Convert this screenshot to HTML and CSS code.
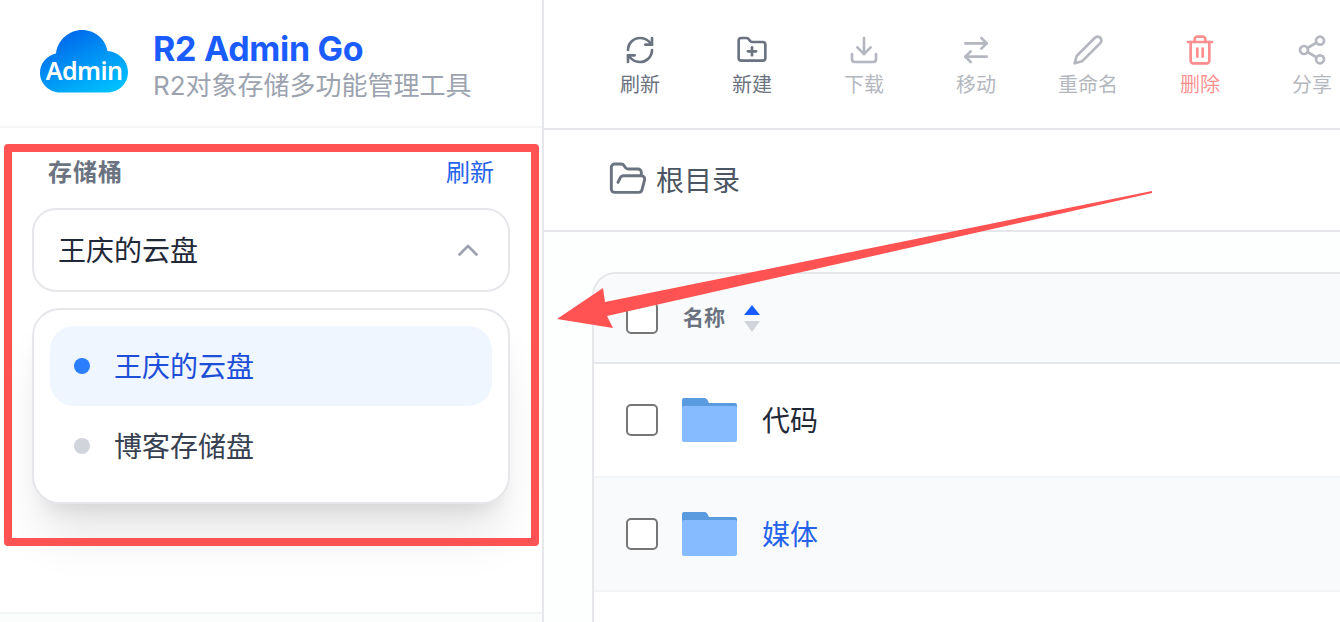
FILE: index.html
```html
<!DOCTYPE html>
<html lang="zh-CN">
<head>
  <meta charset="UTF-8" />
  <meta name="viewport" content="width=device-width, initial-scale=1" />
  <title>R2 Admin Go</title>
  <link rel="stylesheet" href="styles.css">
</head>
<body>

  <div class="app">
    <aside class="sidebar">
      <header class="brand">
        <div class="brand-logo">
          <svg width="88" height="63" viewBox="0 0 88 63">
            <defs>
              <linearGradient id="cloudFill" x1="0.15" y1="0" x2="0.85" y2="1">
                <stop offset="0" stop-color="#0060ea" />
                <stop offset="1" stop-color="#00c4ff" />
              </linearGradient>
            </defs>
            <path d="M20 62.5C9 62.5 0 53.5 0 43C0 33 7 25.5 16 23.5C17.5 10 29 0 42 0C55 0 65.5 9 67.5 21C79 22 88 31 88 42C88 53.5 79 62.5 67 62.5Z" fill="url(#cloudFill)" />
          </svg>
          <span class="logo-text">Admin</span>
        </div>
        <div class="brand-text">
          <h1>R2 Admin Go</h1>
          <p>R2对象存储多功能管理工具</p>
        </div>
      </header>

      <section class="bucket-panel">
        <div class="bucket-head">
          <span class="bucket-label">存储桶</span>
          <a class="bucket-refresh">刷新</a>
        </div>
        <div class="bucket-select">
          <span>王庆的云盘</span>
          <svg class="chevron" width="20" height="12" viewBox="0 0 20 12" fill="none" stroke="#9ca3af" stroke-width="2.6" stroke-linecap="round" stroke-linejoin="round"><path d="M1.5 10.5L10 2l8.5 8.5" /></svg>
        </div>
        <ul class="bucket-menu">
          <li class="bucket-item active"><i class="dot"></i><span>王庆的云盘</span></li>
          <li class="bucket-item"><i class="dot"></i><span>博客存储盘</span></li>
        </ul>
      </section>

      <footer class="sidebar-foot"></footer>
    </aside>

    <main class="content">
      <nav class="toolbar">
        <button class="tool">
          <svg class="tool-icon" viewBox="0 0 24 24"><path d="M3 12a9 9 0 0 1 9-9 9.75 9.75 0 0 1 6.74 2.74L21 8" /><path d="M21 3v5h-5" /><path d="M21 12a9 9 0 0 1-9 9 9.75 9.75 0 0 1-6.74-2.74L3 16" /><path d="M8 16H3v5" /></svg>
          <span>刷新</span>
        </button>
        <button class="tool">
          <svg class="tool-icon" viewBox="0 0 24 24"><path d="M12 10v6" /><path d="M9 13h6" /><path d="M20 20a2 2 0 0 0 2-2V8a2 2 0 0 0-2-2h-7.9a2 2 0 0 1-1.69-.9L9.6 3.9A2 2 0 0 0 7.93 3H4a2 2 0 0 0-2 2v13a2 2 0 0 0 2 2Z" /></svg>
          <span>新建</span>
        </button>
        <button class="tool disabled">
          <svg class="tool-icon" viewBox="0 0 24 24"><path d="M21 15v4a2 2 0 0 1-2 2H5a2 2 0 0 1-2-2v-4" /><path d="M7 10l5 5 5-5" /><path d="M12 15V3" /></svg>
          <span>下载</span>
        </button>
        <button class="tool disabled">
          <svg class="tool-icon" viewBox="0 0 24 24"><path d="m16 3 4 4-4 4" /><path d="M20 7H4" /><path d="m8 21-4-4 4-4" /><path d="M4 17h16" /></svg>
          <span>移动</span>
        </button>
        <button class="tool disabled">
          <svg class="tool-icon" viewBox="0 0 24 24"><path d="M17 3a2.85 2.83 0 1 1 4 4L7.5 20.5 2 22l1.5-5.5Z" /></svg>
          <span>重命名</span>
        </button>
        <button class="tool danger disabled">
          <svg class="tool-icon" viewBox="0 0 24 24"><path d="M3 6h18" /><path d="M19 6v14c0 1-1 2-2 2H7c-1 0-2-1-2-2V6" /><path d="M8 6V4c0-1 1-2 2-2h4c1 0 2 1 2 2v2" /><path d="M10 11v6" /><path d="M14 11v6" /></svg>
          <span>删除</span>
        </button>
        <button class="tool disabled">
          <svg class="tool-icon" viewBox="0 0 24 24"><circle cx="18" cy="5" r="3" /><circle cx="6" cy="12" r="3" /><circle cx="18" cy="19" r="3" /><path d="M8.59 13.51l6.83 3.98" /><path d="M15.41 6.51l-6.82 3.98" /></svg>
          <span>分享</span>
        </button>
      </nav>

      <div class="breadcrumb">
        <svg class="crumb-icon" viewBox="0 0 24 24"><path d="m6 14 1.45-2.9A2 2 0 0 1 9.24 10H20a2 2 0 0 1 1.94 2.5l-1.55 6a2 2 0 0 1-1.94 1.5H4a2 2 0 0 1-2-2V5c0-1.1.9-2 2-2h3.93a2 2 0 0 1 1.66.9l.82 1.2a2 2 0 0 0 1.66.9H18a2 2 0 0 1 2 2v2" /></svg>
        <span>根目录</span>
      </div>

      <div class="file-area">
        <div class="file-table">
          <div class="file-row file-head">
            <input class="check" type="checkbox" />
            <span class="col-name">名称</span>
            <svg class="sort-icon" width="16" height="28" viewBox="0 0 16 28"><path d="M8 0l8 10H0z" fill="#1a5cff" /><path d="M8 27L0 16h16z" fill="#d1d5db" /></svg>
          </div>
          <div class="file-row">
            <input class="check" type="checkbox" />
            <svg class="folder-icon" width="55" height="44" viewBox="0 0 55 44"><path d="M2 0h20c1.5 0 2.5.6 3.5 2l1.5 3h26a2 2 0 0 1 2 2v6H0V2a2 2 0 0 1 2-2z" fill="#5a9bdf" /><path d="M2 8h51a2 2 0 0 1 2 2v32a2 2 0 0 1-2 2H2a2 2 0 0 1-2-2V10a2 2 0 0 1 2-2z" fill="#86bbff" /></svg>
            <span class="file-name">代码</span>
          </div>
          <div class="file-row hover">
            <input class="check" type="checkbox" />
            <svg class="folder-icon" width="55" height="44" viewBox="0 0 55 44"><path d="M2 0h20c1.5 0 2.5.6 3.5 2l1.5 3h26a2 2 0 0 1 2 2v6H0V2a2 2 0 0 1 2-2z" fill="#5a9bdf" /><path d="M2 8h51a2 2 0 0 1 2 2v32a2 2 0 0 1-2 2H2a2 2 0 0 1-2-2V10a2 2 0 0 1 2-2z" fill="#86bbff" /></svg>
            <span class="file-name">媒体</span>
          </div>
        </div>
      </div>
    </main>
  </div>

  <!-- Annotation on top of the screenshot -->
  <div class="mark-box"></div>
  <svg class="mark-arrow" width="1340" height="622" viewBox="0 0 1340 622"><polygon points="557,319 603,288 605,302 1152,191 1152,193 607,316 613,328" fill="#ff5252" /></svg>

</body>
</html>
```

FILE: styles.css
```css
* {
  box-sizing: border-box;
  margin: 0;
  padding: 0;
}

html {
  overflow: hidden;
}

body {
  font-family: 'Inter', 'Noto Sans CJK SC', sans-serif;
  background-color: #ffffff;
  width: 1340px;
  height: 622px;
  overflow: hidden;
  position: relative;
}

.app {
  display: flex;
  height: 622px;
  overflow: hidden;
}

/* Sidebar */
.sidebar {
  width: 544px;
  flex-shrink: 0;
  border-right: 2px solid #e5e7eb;
  display: flex;
  flex-direction: column;
}

.brand {
  height: 128px;
  flex-shrink: 0;
  border-bottom: 2px solid #f3f4f6;
  display: flex;
  align-items: center;
  padding-left: 40px;
  gap: 25px;
}

.brand-logo {
  position: relative;
  width: 88px;
  height: 63px;
  margin-top: -4px;
}

.brand-logo svg {
  display: block;
}

.logo-text {
  position: absolute;
  left: 0;
  right: 0;
  top: 22px;
  text-align: center;
  font-family: 'Noto Sans', sans-serif;
  font-size: 25px;
  line-height: 36px;
  font-weight: 600;
  letter-spacing: -0.6px;
  color: #ffffff;
}

.brand-text {
  padding-top: 6px;
}

.brand-text h1 {
  font-size: 34px;
  line-height: 40px;
  font-weight: 700;
  letter-spacing: -0.3px;
  color: #1a5cff;
}

.brand-text p {
  font-size: 26px;
  line-height: 34px;
  color: #9ca3af;
}

.bucket-panel {
  flex: 1;
  padding: 28px 32px 0;
}

.bucket-head {
  display: flex;
  justify-content: space-between;
  padding: 0 16px;
  font-size: 24px;
  line-height: 34px;
  margin-bottom: 18px;
}

.bucket-label {
  font-weight: 600;
  letter-spacing: 1px;
  color: #6b7280;
}

.bucket-refresh {
  color: #2563eb;
}

.bucket-select {
  height: 84px;
  border: 2px solid #e5e7eb;
  border-radius: 24px;
  display: flex;
  align-items: center;
  justify-content: space-between;
  padding: 0 30px 2px 24px;
  font-size: 28px;
  color: #1f2937;
}

.chevron {
  margin-top: 2px;
}

.bucket-menu {
  list-style: none;
  margin-top: 16px;
  padding: 16px;
  background: #ffffff;
  border: 2px solid #e5e7eb;
  border-radius: 28px;
  box-shadow: 0 40px 50px -10px rgba(0, 0, 0, 0.1), 0 16px 20px -12px rgba(0, 0, 0, 0.1);
}

.bucket-item {
  height: 80px;
  border-radius: 24px;
  display: flex;
  align-items: center;
  gap: 24px;
  padding-left: 24px;
  font-size: 28px;
  color: #374151;
}

.bucket-item span {
  margin-bottom: 2px;
}

.bucket-item.active {
  background-color: #eff6ff;
  color: #1d4ed8;
}

.dot {
  width: 16px;
  height: 16px;
  border-radius: 50%;
  background-color: #d1d5db;
}

.bucket-item.active .dot {
  background-color: #2b7fff;
}

.sidebar-foot {
  height: 10px;
  flex-shrink: 0;
  border-top: 2px solid #f3f4f6;
  background-color: #fbfcfc;
}

/* Main */
.content {
  flex: 1;
  min-width: 0;
  display: flex;
  flex-direction: column;
  overflow: hidden;
}

.toolbar {
  height: 130px;
  flex-shrink: 0;
  border-bottom: 2px solid #e5e7eb;
  display: flex;
  padding: 34px 0 0 40px;
  overflow: hidden;
}

.tool {
  width: 112px;
  flex-shrink: 0;
  height: 65px;
  background: none;
  border: none;
  font-family: inherit;
  font-size: 20px;
  line-height: 28px;
  color: #6b7280;
  display: flex;
  flex-direction: column;
  align-items: center;
  gap: 5px;
}

.tool-icon {
  width: 32px;
  height: 32px;
  fill: none;
  stroke: currentColor;
  stroke-width: 2;
  stroke-linecap: round;
  stroke-linejoin: round;
}

.tool.disabled {
  opacity: 0.5;
}

.tool.danger {
  color: #f91f1f;
}

.breadcrumb {
  height: 102px;
  flex-shrink: 0;
  border-bottom: 2px solid #e5e7eb;
  display: flex;
  align-items: center;
  gap: 8px;
  padding: 0 0 2px 64px;
  font-size: 28px;
  color: #4b5563;
}

.crumb-icon {
  width: 40px;
  height: 40px;
  fill: none;
  stroke: #6b7280;
  stroke-width: 1.75;
  stroke-linecap: round;
  stroke-linejoin: round;
}

.file-area {
  flex: 1;
  min-height: 0;
  padding: 40px 0 0 48px;
  background-color: #fdfefe;
  overflow: hidden;
}

.file-table {
  background-color: #ffffff;
  border: 2px solid #e5e7eb;
  border-right: none;
  border-bottom: none;
  border-radius: 24px 0 0 0;
  height: 350px;
}

.file-row {
  height: 114px;
  border-bottom: 2px solid #f3f4f6;
  display: flex;
  align-items: center;
  padding-left: 32px;
  gap: 24px;
}

.file-row.file-head {
  height: 90px;
  background-color: #f9fafb;
  border-bottom-color: #e5e7eb;
  border-radius: 22px 0 0 0;
}

.file-row.hover {
  background-color: #f9fafb;
}

.check {
  appearance: none;
  width: 32px;
  height: 32px;
  flex-shrink: 0;
  background: #ffffff;
  border: 2px solid #767676;
  border-radius: 5px;
}

.col-name {
  font-size: 21px;
  line-height: 28px;
  font-weight: 700;
  color: #6b7280;
  margin-left: 1px;
}

.sort-icon {
  margin-left: -5px;
  margin-top: 2px;
}

.folder-icon {
  flex-shrink: 0;
}

.file-name {
  font-size: 28px;
  color: #1f2937;
  margin-left: 1px;
  margin-bottom: 2px;
}

.file-row.hover .file-name {
  color: #2563eb;
}

/* Annotation */
.mark-box {
  position: absolute;
  left: 4px;
  top: 144px;
  width: 535px;
  height: 402px;
  border: 8px solid #ff5252;
  border-radius: 4px;
}

.mark-arrow {
  position: absolute;
  left: 0;
  top: 0;
}
```
